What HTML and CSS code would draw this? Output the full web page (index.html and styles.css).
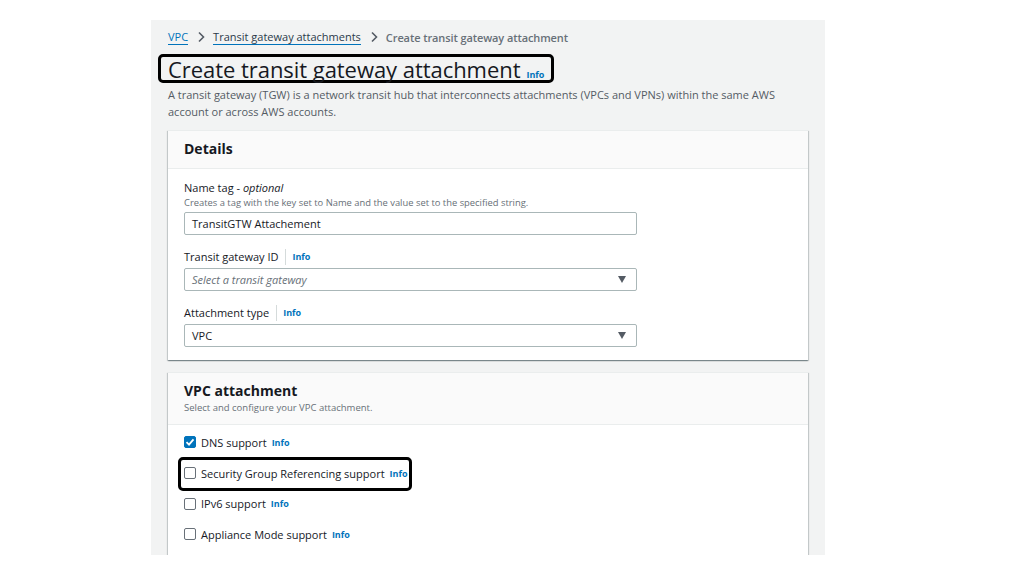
FILE: index.html
```html
<!DOCTYPE html>
<html lang="en">
  <head>
    <meta charset="UTF-8" />
    <meta name="viewport" content="width=device-width, initial-scale=1.0" />
    <title>Create transit gateway attachment</title>
    <link rel="stylesheet" href="styles.css">
  </head>
  <body>
    <div id="panel">
      <div class="crumbs">
        <a class="crumb link-blue" href="#">VPC</a>
        <svg class="sep" viewBox="0 0 8 12" width="8" height="12"><path d="M2 1.5 L6.5 6 L2 10.5" fill="none" stroke="#545b64" stroke-width="1.6"/></svg>
        <a class="crumb link-dark" href="#">Transit gateway attachments</a>
        <svg class="sep" viewBox="0 0 8 12" width="8" height="12"><path d="M2 1.5 L6.5 6 L2 10.5" fill="none" stroke="#545b64" stroke-width="1.6"/></svg>
        <span class="crumb current">Create transit gateway attachment</span>
      </div>

      <div class="mark title-mark">
        <h1>Create transit gateway attachment</h1>
        <a class="info" href="#">Info</a>
      </div>
      <p class="intro">A transit gateway (TGW) is a network transit hub that interconnects attachments (VPCs and VPNs) within the same AWS account or across AWS accounts.</p>

      <div class="card">
        <div class="card-head">
          <h2>Details</h2>
        </div>
        <div class="card-body">
          <div class="field">
            <div class="label plain">Name tag - <i>optional</i></div>
            <div class="hint">Creates a tag with the key set to Name and the value set to the specified string.</div>
            <div class="input">TransitGTW Attachement</div>
          </div>
          <div class="field">
            <div class="label"><span class="label-text">Transit gateway ID</span><a class="info" href="#">Info</a></div>
            <div class="input select placeholder">Select a transit gateway<span class="caret"></span></div>
          </div>
          <div class="field">
            <div class="label"><span class="label-text">Attachment type</span><a class="info" href="#">Info</a></div>
            <div class="input select">VPC<span class="caret"></span></div>
          </div>
        </div>
      </div>

      <div class="card">
        <div class="card-head">
          <h2>VPC attachment</h2>
          <div class="sub">Select and configure your VPC attachment.</div>
        </div>
        <div class="card-body checks">
          <div class="check-row">
            <span class="box checked">
              <svg viewBox="0 0 12 12" width="12" height="12"><path d="M2.5 6.2 L5 8.7 L9.5 3.3" fill="none" stroke="#fff" stroke-width="1.8"/></svg>
            </span>
            DNS support <a class="info" href="#">Info</a>
          </div>
          <div class="check-row">
            <div class="mark row-mark">
              <span class="box"></span>
              Security Group Referencing support <a class="info" href="#">Info</a>
            </div>
          </div>
          <div class="check-row">
            <span class="box"></span>
            IPv6 support <a class="info" href="#">Info</a>
          </div>
          <div class="check-row">
            <span class="box"></span>
            Appliance Mode support <a class="info" href="#">Info</a>
          </div>
        </div>
      </div>
    </div>
  </body>
</html>
```

FILE: styles.css
```css
  * {
    box-sizing: border-box;
  }
  body {
    margin: 0;
    background-color: #ffffff;
    font-family: "Open Sans", Roboto, sans-serif;
    color: #16191f;
  }
  a {
    text-decoration: none;
  }
  #panel {
    background-color: #f2f3f3;
    width: 674px;
    height: 535px;
    margin: 20px 0 0 151px;
    padding: 8px 16px 0 16px;
    overflow: hidden;
  }
  .crumbs {
    display: flex;
    align-items: center;
    font-size: 11px;
    height: 18px;
    padding-left: 1px;
  }
  .crumb.link-blue {
    color: #0073bb;
    border-bottom: 1px solid #0073bb;
  }
  .crumb.link-dark {
    color: #2b3a4a;
    border-bottom: 1px solid #0073bb;
  }
  .crumb.current {
    color: #687078;
    font-weight: 600;
    letter-spacing: -0.1px;
  }
  .sep {
    margin: 0 8px 0 9px;
  }
  .mark {
    border: 3px solid #000;
    border-radius: 5px;
  }
  .title-mark {
    display: inline-flex;
    align-items: baseline;
    margin: 8px 0 0 -9px;
    padding: 0 7px 0 7px;
    height: 29px;
  }
  h1 {
    margin: 0;
    font-size: 22px;
    font-weight: 400;
    line-height: 24px;
    color: #16191f;
    letter-spacing: -0.05px;
  }
  .info {
    color: #0073bb;
    font-size: 9px;
    font-weight: 700;
    margin-left: 6px;
  }
  .intro {
    margin: 3px 0 10px 1px;
    font-size: 11px;
    line-height: 17px;
    color: #545b64;
    width: 620px;
  }
  .card {
    background-color: #ffffff;
    border-top: 1px solid #eaeded;
    box-shadow: 0 1px 1px 0 rgba(0, 28, 36, 0.3), 1px 1px 1px 0 rgba(0, 28, 36, 0.15), -1px 1px 1px 0 rgba(0, 28, 36, 0.15);
    margin: 0 0 12px 1px;
    width: 640px;
  }
  .card-head {
    background-color: #fafafa;
    border-bottom: 1px solid #eaeded;
    padding: 8px 16px 10px 16px;
  }
  h2 {
    margin: 0;
    font-size: 14px;
    font-weight: 700;
    line-height: 19px;
  }
  .sub {
    font-size: 9.5px;
    color: #687078;
    margin-top: 1px;
  }
  .card-body {
    padding: 11px 16px 13px 16px;
  }
  .field {
    margin-bottom: 14px;
  }
  .field:last-child {
    margin-bottom: 0;
  }
  .label {
    display: flex;
    align-items: center;
    font-size: 11px;
    line-height: 16px;
    color: #16191f;
  }
  .label.plain {
    display: block;
  }
  .label-text {
    border-right: 1px solid #d5dbdb;
    padding-right: 7px;
  }
  .hint {
    font-size: 9.4px;
    color: #687078;
    line-height: 13px;
    margin-bottom: 3px;
  }
  .label + .input {
    margin-top: 3px;
  }
  .input {
    width: 453px;
    height: 23px;
    border: 1px solid #aab7b8;
    border-radius: 2px;
    padding: 0 7px;
    display: flex;
    align-items: center;
    font-size: 11px;
    color: #16191f;
  }
  .select {
    justify-content: space-between;
  }
  .placeholder {
    color: #687078;
    font-style: italic;
  }
  .caret {
    width: 0;
    height: 0;
    border-left: 4px solid transparent;
    border-right: 4px solid transparent;
    border-top: 7px solid #545b64;
    margin-right: 3px;
  }
  .checks {
    padding-top: 2px;
  }
  .check-row {
    display: flex;
    align-items: center;
    height: 30.7px;
    font-size: 11px;
  }
  .check-row .info {
    margin-left: 5px;
  }
  .row-mark {
    display: flex;
    align-items: center;
    height: 34px;
    width: 234px;
    margin: 2px 0 0 -6px;
    padding: 0 0 2px 3px;
    overflow: hidden;
    white-space: nowrap;
  }
  .box {
    width: 12px;
    height: 12px;
    border: 1px solid #687078;
    border-radius: 2px;
    margin-right: 5px;
    display: inline-flex;
    flex-shrink: 0;
  }
  .box.checked {
    background-color: #0073bb;
    border-color: #0073bb;
  }
  .box svg {
    display: block;
    margin: -1px;
  }
```
